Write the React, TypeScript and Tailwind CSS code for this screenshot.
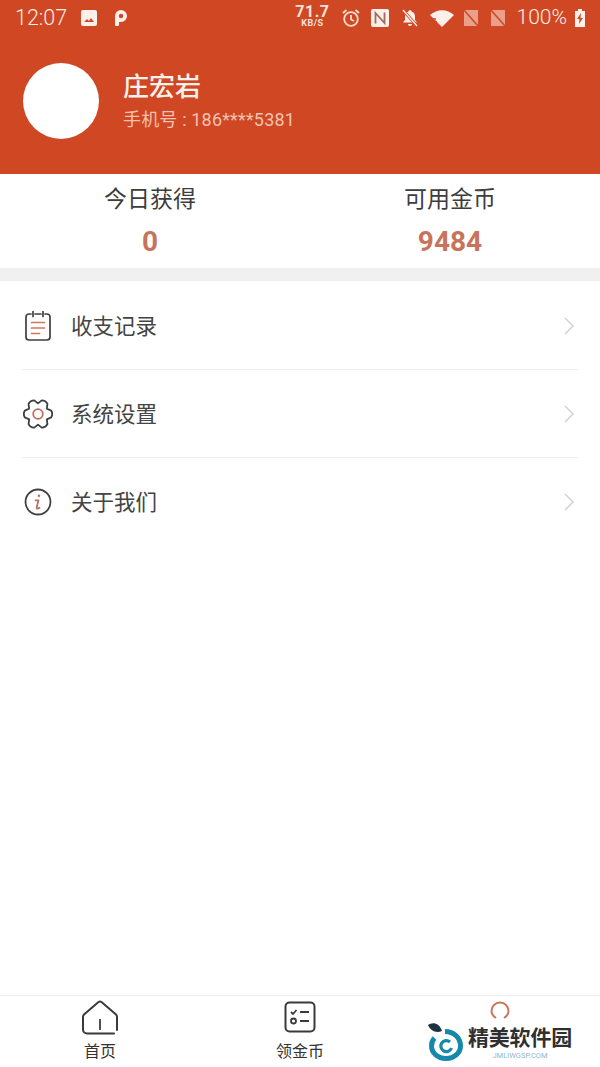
const cjk = { fontFamily: '"Roboto", "Noto Sans CJK SC", sans-serif' };

const StatusBar = () => (
  <div className="flex h-[35px] items-center pl-[15px] pr-[14px] text-[#fdeee8]">
    <span className="text-[21.500px] leading-none font-light">12:07</span>
    <svg className="ml-[13px]" width="18" height="18" viewBox="0 0 18 18">
      <rect x="1" y="1" width="16" height="16" rx="2" fill="#fdf0ea" />
      <path d="M4 13l3-3 2 2 2-3 3 4z" fill="#d04723" />
    </svg>
    <svg className="ml-[15px]" width="16" height="18" viewBox="0 0 16 18">
      <path d="M2 17V7a6 6 0 1 1 6 6H6v3a1 1 0 0 1-1 1z" fill="#fdf0ea" />
      <circle cx="8" cy="7" r="2.200" fill="#d04723" />
    </svg>
    <div className="ml-auto flex items-center">
      <div className="mr-[11px] mb-[3px] flex flex-col items-center font-bold text-[#fbe3da]">
        <span className="text-[16px] leading-[15px] tracking-[0.500px]">71.7</span>
        <span className="text-[9px] leading-[9px] tracking-[0.500px]">KB/S</span>
      </div>
      <svg width="20" height="20" viewBox="0 0 20 20" fill="none" stroke="#fbdccf" strokeWidth="1.800">
        <circle cx="10" cy="11" r="6.800" />
        <path d="M10 7v4.500l3 1.500M2 5l3.500-3M18 5l-3.500-3" />
      </svg>
      <svg className="ml-[9px]" width="20" height="20" viewBox="0 0 20 20">
        <rect x="1" y="1" width="18" height="18" rx="2" fill="#fdf0ea" />
        <path d="M5.500 15.500V5l9 10V4.500" fill="none" stroke="#a06a5a" strokeWidth="1.800" />
      </svg>
      <svg className="ml-[10px]" width="20" height="20" viewBox="0 0 20 20">
        <path d="M10 2a1.500 1.500 0 0 1 1.500 1.500c2.600.7 3.500 2.800 3.500 5.500v3l2 2.500H3L5 12V9c0-2.700.9-4.800 3.500-5.500A1.500 1.500 0 0 1 10 2zM8 16h4a2 2 0 0 1-4 0z" fill="#fdf0ea" />
        <path d="M3 2l14 16" stroke="#d04723" strokeWidth="3" />
        <path d="M3 2l14 16" stroke="#fdf0ea" strokeWidth="1.400" />
      </svg>
      <svg className="ml-[9px]" width="26" height="20" viewBox="0 0 26 20">
        <path d="M1 7c7-6.500 17-6.500 24 0l-12 12z" fill="#fdf0ea" />
        <path d="M1 11h6M3 14h5M5 17h5" stroke="#d04723" strokeWidth="1.500" />
      </svg>
      <svg className="ml-[8px]" width="16" height="20" viewBox="0 0 16 20">
        <rect x="1" y="2" width="14" height="16" fill="#e99f89" />
        <path d="M1 2l14 16" stroke="#d04723" strokeWidth="1.500" />
      </svg>
      <svg className="ml-[11px]" width="16" height="20" viewBox="0 0 16 20">
        <rect x="1" y="2" width="14" height="16" fill="#e99f89" />
        <path d="M1 2l14 16" stroke="#d04723" strokeWidth="1.500" />
      </svg>
      <span className="ml-[11px] text-[21px] leading-none font-light">100%</span>
      <svg className="ml-[7px]" width="12" height="20" viewBox="0 0 12 20">
        <path d="M4 1h4v2h3v16H1V3h3z" fill="#fdf0ea" />
        <path d="M7 5L3 11h2.500L5 16l4-6H6.500z" fill="#d04723" />
      </svg>
    </div>
  </div>
);

const NoteIcon = () => (
  <svg width="26" height="31" viewBox="0 0 26 31" fill="none">
    <path d="M6 4H4a3 3 0 0 0-3 3v20a3 3 0 0 0 3 3h18a3 3 0 0 0 3-3V7a3 3 0 0 0-3-3h-2M10 4h6" stroke="#3f3f3f" strokeWidth="1.700" strokeLinecap="round" />
    <path d="M8 1.500v5M18 1.500v5" stroke="#3f3f3f" strokeWidth="1.700" strokeLinecap="round" />
    <path d="M6.500 12.500h13M6.500 18h13M6.500 23.500h8" stroke="#cf7a60" strokeWidth="1.700" strokeLinecap="round" />
  </svg>
);

// six flat teeth around the centre, notches between them
const gearPath = () => {
  const pt = (r: number, deg: number) => {
    const a = (deg * Math.PI) / 180;
    return `${(15 + r * Math.cos(a)).toFixed(2)} ${(15 + r * 1.040 * Math.sin(a)).toFixed(2)}`;
  };
  let d = `M${pt(10.200, -30)}`;
  for (let i = 0; i < 6; i++) {
    const lobe = i * 60;
    d += `L${pt(13.600, lobe - 14)}Q${pt(15.200, lobe)} ${pt(13.600, lobe + 14)}L${pt(10.200, lobe + 30)}`;
  }
  return d + "z";
};

const GearIcon = () => (
  <svg width="30" height="30" viewBox="0 0 30 30" fill="none">
    <path d={gearPath()} stroke="#3f3f3f" strokeWidth="1.800" strokeLinejoin="round" />
    <circle cx="15" cy="15" r="4.800" stroke="#b9705c" strokeWidth="1.800" />
  </svg>
);

const InfoIcon = () => (
  <svg width="28" height="28" viewBox="0 0 28 28" fill="none">
    <circle cx="14" cy="14" r="12.500" stroke="#3f3f3f" strokeWidth="1.800" />
    <circle cx="15" cy="7.800" r="1.300" fill="#b9705c" />
    <path d="M11.500 12.300h3L12.700 19.500c-.3 1.300.8 1.600 2.800.3" stroke="#b9705c" strokeWidth="1.800" strokeLinecap="round" strokeLinejoin="round" />
  </svg>
);

const menu = [
  { label: "收支记录", icon: <NoteIcon /> },
  { label: "系统设置", icon: <GearIcon /> },
  { label: "关于我们", icon: <InfoIcon /> },
];

const Logo = () => (
  <div className="absolute right-[28px] bottom-[5px] flex items-start">
    <svg width="36" height="40" viewBox="0 0 36 40" fill="none">
      <path d="M0 3c4-3 11-3 14 6-5 2-11 1-14-6z" fill="#1d3440" />
      <path d="M17 9.500C26 9.500 32.500 16 32.500 24c0 7-6.500 12.500-14.500 12.500C10 36.500 3.500 31 3.500 24c0-3 1-6 3-8" stroke="#1588ab" strokeWidth="5" />
      <path d="M22 20a5.500 5.500 0 1 0 1.500 6" stroke="#1588ab" strokeWidth="3.200" />
    </svg>
    <div className="ml-[4px] flex flex-col items-center pt-[4px]">
      <span className="text-[21px] leading-[24px] font-bold tracking-[-0.200px] text-[#2f2f2f]">精美软件园</span>
      <span className="mt-[2px] text-[7.500px] leading-[8px] text-[#8fb9cf]">JMLIWGSP.COM</span>
    </div>
  </div>
);

const TabBar = () => (
  <div className="relative mt-auto flex h-[72px] border-t border-[#efefef] bg-white text-[#333]">
    <div className="flex flex-1 flex-col items-center pt-[4px]">
      <svg width="38" height="36" viewBox="0 0 38 36" fill="none">
        <path d="M33 33.500H6a4 4 0 0 1-4-4V17q0-1.500 1-2.500L17.500 2q1.500-1 3 0L35 14.500q1 1 1 2.500v13" stroke="#3a3a3a" strokeWidth="2" strokeLinecap="round" />
        <path d="M19 19v11" stroke="#3a3a3a" strokeWidth="1.800" />
      </svg>
      <span className="mt-[6px] text-[16px] leading-[20px]">首页</span>
    </div>
    <div className="flex flex-1 flex-col items-center pt-[5px]">
      <svg width="32" height="32" viewBox="0 0 32 32" fill="none">
        <rect x="1.500" y="1.500" width="29" height="29" rx="4" stroke="#3a3a3a" strokeWidth="2" />
        <path d="M7 11l2 2 3.500-4M16 11h9M16 20h9" stroke="#3a3a3a" strokeWidth="1.800" />
        <circle cx="9.500" cy="20" r="2.500" stroke="#3a3a3a" strokeWidth="1.800" />
      </svg>
      <span className="mt-[9px] text-[16px] leading-[20px]">领金币</span>
    </div>
    <div className="flex flex-1 flex-col items-center pt-[5px]">
      <svg width="20" height="20" viewBox="0 0 20 20" fill="none">
        <path d="M6 17C3 15 1.500 12.500 1.500 10a8.500 8.500 0 0 1 17 0c0 2.500-1.500 5-4.500 7" stroke="#c9765e" strokeWidth="2" />
      </svg>
    </div>
    <Logo />
  </div>
);

const App = () => (
  <div className="flex h-[1067px] w-[600px] flex-col overflow-hidden bg-white" style={cjk}>
    <div className="h-[174px] bg-[#d04723]">
      <StatusBar />
      <div className="mt-[28px] flex items-center pl-[23px]">
        <div className="h-[76px] w-[76px] rounded-full bg-white" />
        <div className="ml-[24px]">
          <div className="text-[26px] leading-[32px] font-medium text-[#fdf1ec]">庄宏岩</div>
          <div className="mt-[5px] text-[18px] leading-[24px] tracking-[0.170px] text-[#f3c2b2]">手机号 : 186****5381</div>
        </div>
      </div>
    </div>

    <div className="box-content flex h-[94px] border-b-[13px] border-[#f0f0f0]">
      <div className="flex flex-1 flex-col items-center pt-[10px]">
        <span className="text-[23px] leading-[32px] text-[#3d3d3d]">今日获得</span>
        <span className="mt-[10px] text-[28px] leading-[32px] font-bold text-[#c8735b]">0</span>
      </div>
      <div className="flex flex-1 flex-col items-center pt-[10px]">
        <span className="text-[23px] leading-[32px] text-[#3d3d3d]">可用金币</span>
        <span className="mt-[10px] text-[28px] leading-[32px] font-bold text-[#c8735b]">9484</span>
      </div>
    </div>

    <div className="px-[22px] pt-[1px]">
      {menu.map((item, i) => (
        <div key={item.label} className={`flex h-[88px] items-center ${i < 2 ? "border-b border-[#efefef]" : ""}`}>
          <div className="flex w-[32px] justify-center">{item.icon}</div>
          <span className="ml-[17px] pt-[2px] text-[21.500px] leading-none text-[#444]">{item.label}</span>
          <svg className="mr-[4px] ml-auto" width="10" height="18" viewBox="0 0 10 18" fill="none">
            <path d="M1 1l8 8-8 8" stroke="#d4d4d4" strokeWidth="1.600" />
          </svg>
        </div>
      ))}
    </div>

    <TabBar />
  </div>
);

export default App;
